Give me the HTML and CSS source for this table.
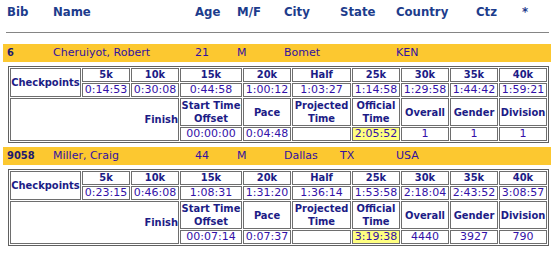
FILE: index.html
```html
<!DOCTYPE html>
<html>
<head>
<meta charset="utf-8">
<link rel="stylesheet" href="styles.css">
</head>
<body>
<div class="page">
  <div class="cols colhead">
    <span>Bib</span><span>Name</span><span>Age</span><span>M/F</span><span>City</span><span>State</span><span>Country</span><span>Ctz</span><span>*</span>
  </div>
  <div class="rule"></div>

  <section class="entry">
    <div class="cols runner">
      <span class="bib">6</span><span>Cheruiyot, Robert</span><span>21</span><span>M</span><span>Bomet</span><span></span><span>KEN</span><span></span><span></span>
    </div>
    <table class="splits">
      <colgroup>
        <col class="c-cp"><col class="c-k"><col class="c-k"><col class="c-15"><col class="c-k"><col class="c-half"><col class="c-k"><col class="c-k"><col class="c-k"><col class="c-k">
      </colgroup>
      <tr><th rowspan="2" class="cp">Checkpoints</th><th>5k</th><th>10k</th><th>15k</th><th>20k</th><th>Half</th><th>25k</th><th>30k</th><th>35k</th><th>40k</th></tr>
      <tr><td>0:14:53</td><td>0:30:08</td><td>0:44:58</td><td>1:00:12</td><td>1:03:27</td><td>1:14:58</td><td>1:29:58</td><td>1:44:42</td><td>1:59:21</td></tr>
      <tr class="labels"><th rowspan="2" colspan="3" class="finish">Finish</th><th>Start Time<br>Offset</th><th>Pace</th><th>Projected<br>Time</th><th>Official<br>Time</th><th>Overall</th><th>Gender</th><th>Division</th></tr>
      <tr><td>00:00:00</td><td>0:04:48</td><td></td><td class="official">2:05:52</td><td>1</td><td>1</td><td>1</td></tr>
    </table>
  </section>

  <section class="entry">
    <div class="cols runner">
      <span class="bib">9058</span><span>Miller, Craig</span><span>44</span><span>M</span><span>Dallas</span><span>TX</span><span>USA</span><span></span><span></span>
    </div>
    <table class="splits">
      <colgroup>
        <col class="c-cp"><col class="c-k"><col class="c-k"><col class="c-15"><col class="c-k"><col class="c-half"><col class="c-k"><col class="c-k"><col class="c-k"><col class="c-k">
      </colgroup>
      <tr><th rowspan="2" class="cp">Checkpoints</th><th>5k</th><th>10k</th><th>15k</th><th>20k</th><th>Half</th><th>25k</th><th>30k</th><th>35k</th><th>40k</th></tr>
      <tr><td>0:23:15</td><td>0:46:08</td><td>1:08:31</td><td>1:31:20</td><td>1:36:14</td><td>1:53:58</td><td>2:18:04</td><td>2:43:52</td><td>3:08:57</td></tr>
      <tr class="labels"><th rowspan="2" colspan="3" class="finish">Finish</th><th>Start Time<br>Offset</th><th>Pace</th><th>Projected<br>Time</th><th>Official<br>Time</th><th>Overall</th><th>Gender</th><th>Division</th></tr>
      <tr><td>00:07:14</td><td>0:07:37</td><td></td><td class="official">3:19:38</td><td>4440</td><td>3927</td><td>790</td></tr>
    </table>
  </section>
</div>
</body>
</html>
```

FILE: styles.css
```css
html, body {
  margin: 0;
  padding: 0;
  background: #ffffff;
}

body {
  font-family: "DejaVu Sans", Verdana, sans-serif;
  font-size: 11px;
}

.page {
  width: 548px;
  padding-left: 3px;
}

.cols {
  display: grid;
  grid-template-columns: 46px 142px 42px 47px 56px 56px 80px 46px 1fr;
  padding-left: 4px;
}

.colhead {
  height: 28px;
  padding-top: 4px;
  font-family: "DejaVu Sans Condensed", "DejaVu Sans", sans-serif;
  font-stretch: semi-condensed;
  font-weight: bold;
  font-size: 13px;
  line-height: 16px;
  color: #1d3c8c;
}

.rule {
  margin: 0 2px 0 3px;
  border-top: 1px solid #858585;
}

.entry:first-of-type {
  margin-top: 11px;
}

.runner {
  background: #fcc830;
  line-height: 18px;
  color: #3311a0;
}

.runner .bib {
  font-family: "DejaVu Sans Condensed", "DejaVu Sans", sans-serif;
  font-stretch: semi-condensed;
  font-weight: bold;
  color: #1e1a6e;
}

.splits {
  margin: 4px 0 4px 5px;
  width: 541px;
  table-layout: fixed;
  border-collapse: separate;
  border-spacing: 1px;
  border: 1px solid #606060;
}

.c-cp { width: 71px; }
.c-k { width: 48px; }
.c-15 { width: 62px; }
.c-half { width: 59px; }

.splits th,
.splits td {
  border: 1px solid #6e6e6e;
  padding: 0;
  line-height: 12px;
  text-align: center;
  vertical-align: middle;
  white-space: nowrap;
}

.splits th {
  font-family: "DejaVu Sans Condensed", "DejaVu Sans", sans-serif;
  font-stretch: semi-condensed;
  font-weight: bold;
  font-size: 11px;
  color: #1c1c86;
}

.splits td {
  color: #3311a8;
}

.splits .labels th {
  line-height: 13px;
}

.splits .finish {
  text-align: right;
}

.splits .official {
  background: #ffff80;
}
```
